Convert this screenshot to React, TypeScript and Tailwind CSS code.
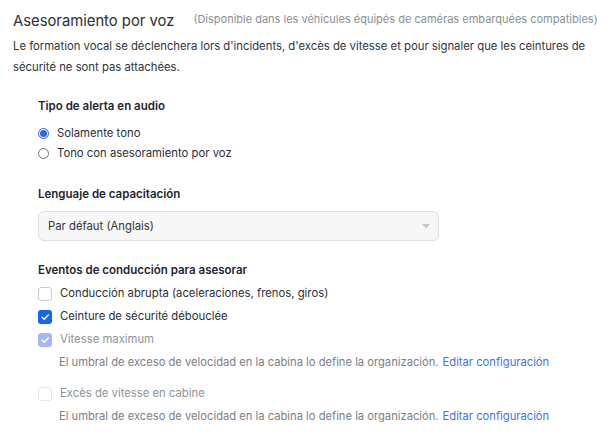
import React from "react";

const Check = ({ color = "white" }: { color?: string }) => (
  <svg width="10" height="10" viewBox="0 0 10 10" fill="none">
    <path d="M2 5.2 L4.2 7.3 L8.2 2.9" stroke={color} strokeWidth="1.5" strokeLinecap="round" strokeLinejoin="round" />
  </svg>
);

function CheckRow({
  label,
  state,
}: {
  label: string;
  state: "off" | "on" | "disabledOn" | "disabledOff";
}) {
  let box = "";
  if (state === "off") box = "border border-[#c9ced6] bg-white";
  if (state === "on") box = "bg-[#1565f5]";
  if (state === "disabledOn") box = "bg-[#a6b7f6]";
  if (state === "disabledOff") box = "border border-[#e3e6ea] bg-white";
  const text = state === "disabledOn" || state === "disabledOff" ? "text-[#8e939b]" : "text-[#2b2f36]";
  return (
    <div className="flex items-center h-[23px]">
      <div className={`w-[14px] h-[14px] rounded-[3px] flex items-center justify-center ${box}`}>
        {(state === "on" || state === "disabledOn") && <Check />}
      </div>
      <span className={`ml-[8px] text-[11.3px] ${text}`}>{label}</span>
    </div>
  );
}

function Helper() {
  return (
    <div className="pl-[21px] text-[11.2px] text-[#7b8089] h-[23px] flex items-center">
      El umbral de exceso de velocidad en la cabina lo define la organización.
      <span className="ml-[4px] text-[#3f73e8]">Editar configuración</span>
    </div>
  );
}

export default function App() {
  return (
    <div
      className="w-[610px] h-[443px] bg-white overflow-hidden"
      style={{ fontFamily: "Inter, 'Noto Sans', sans-serif" }}
    >
      <div className="flex items-start pl-[13px] pt-[11px]">
        <h1 className="text-[14.8px] leading-[20px] text-[#2a2e35] font-normal whitespace-nowrap">
          Asesoramiento por voz
        </h1>
        <span className="ml-[19px] text-[11px] leading-[16px] text-[#8a8f97] whitespace-nowrap">
          (Disponible dans les véhicules équipés de caméras embarquées compatibles)
        </span>
      </div>
      <p className="pl-[13px] pr-[10px] mt-[5px] text-[11.3px] leading-[21px] text-[#30343b]">
        Le formation vocal se déclenchera lors d'incidents, d'excès de vitesse et pour signaler que les ceintures de sécurité ne sont pas attachées.
      </p>

      <div className="pl-[38px] mt-[19px]">
        <div className="text-[11.5px] font-semibold text-[#1f2530] leading-[18px]">Tipo de alerta en audio</div>
        <div className="mt-[8px] flex flex-col">
          <div className="flex items-center h-[20px]">
            <div className="w-[11px] h-[11px] rounded-full border border-[#2866ea] flex items-center justify-center">
              <div className="w-[7px] h-[7px] rounded-full bg-[#2866ea]" />
            </div>
            <span className="ml-[8px] text-[11.3px] text-[#2b2f36]">Solamente tono</span>
          </div>
          <div className="flex items-center h-[20px]">
            <div className="w-[11px] h-[11px] rounded-full border border-[#70757d] bg-white" />
            <span className="ml-[8px] text-[11.3px] text-[#2b2f36]">Tono con asesoramiento por voz</span>
          </div>
        </div>

        <div className="mt-[22px] text-[11.5px] font-semibold text-[#1f2530] leading-[18px]">Lenguaje de capacitación</div>
        <div className="mt-[8px] w-[401px] h-[30px] rounded-[6px] border border-[#dcdee2] bg-[#f7f7f8] flex items-center justify-between pl-[9px] pr-[8px]">
          <span className="text-[11.3px] text-[#30343b]">Par défaut (Anglais)</span>
          <svg width="8" height="5" viewBox="0 0 8 5">
            <path d="M0 0 L8 0 L4 4.5 Z" fill="#c4c6ca" />
          </svg>
        </div>

        <div className="mt-[20px] text-[11.5px] font-semibold text-[#1f2530] leading-[18px]">Eventos de conducción para asesorar</div>
        <div className="mt-[3px] flex flex-col">
          <CheckRow label="Conducción abrupta (aceleraciones, frenos, giros)" state="off" />
          <CheckRow label="Ceinture de sécurité débouclée" state="on" />
          <CheckRow label="Vitesse maximum" state="disabledOn" />
          <Helper />
          <div className="h-[8px]" />
          <CheckRow label="Excès de vitesse en cabine" state="disabledOff" />
          <Helper />
        </div>
      </div>
    </div>
  );
}
